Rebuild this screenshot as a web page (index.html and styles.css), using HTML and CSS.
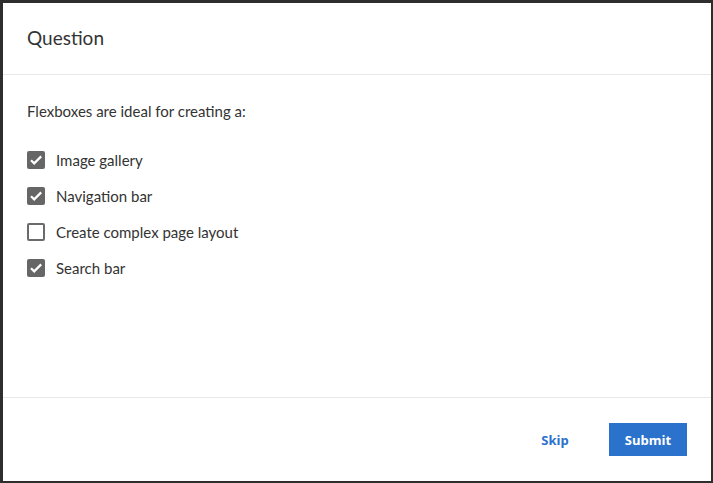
FILE: index.html
```html
<!DOCTYPE html>
<html lang="en">
<head>
<meta charset="utf-8">
<title>Question</title>
<link rel="stylesheet" href="styles.css">
</head>
<body>
<div class="modal">
  <header class="modal-header">
    <h1 class="title">Question</h1>
  </header>
  <main class="modal-body">
    <p class="prompt">Flexboxes are ideal for creating a:</p>
    <ul class="options">
      <li class="option"><span class="box checked"><svg viewBox="0 0 18 18" width="18" height="18"><path d="M4 9.2l3.2 3.2L14.2 5.4" fill="none" stroke="#fff" stroke-width="2.2"/></svg></span><span class="label">Image gallery</span></li>
      <li class="option"><span class="box checked"><svg viewBox="0 0 18 18" width="18" height="18"><path d="M4 9.2l3.2 3.2L14.2 5.4" fill="none" stroke="#fff" stroke-width="2.2"/></svg></span><span class="label">Navigation bar</span></li>
      <li class="option"><span class="box"></span><span class="label">Create complex page layout</span></li>
      <li class="option"><span class="box checked"><svg viewBox="0 0 18 18" width="18" height="18"><path d="M4 9.2l3.2 3.2L14.2 5.4" fill="none" stroke="#fff" stroke-width="2.2"/></svg></span><span class="label">Search bar</span></li>
    </ul>
  </main>
  <footer class="modal-footer">
    <button class="btn btn-link">Skip</button>
    <button class="btn btn-primary">Submit</button>
  </footer>
</div>
</body>
</html>
```

FILE: styles.css
```css
html, body {
  margin: 0;
  padding: 0;
  height: 100%;
}
body {
  background: #2e2e2e;
  padding: 3px 2px 2px 3px;
  box-sizing: border-box;
  font-family: Lato, "Open Sans", sans-serif;
  color: #333;
}
.modal {
  background: #fff;
  height: 478px;
  display: flex;
  flex-direction: column;
}
.modal-header {
  height: 71px;
  border-bottom: 1px solid #e8e8e8;
  display: flex;
  align-items: center;
  padding: 0 24px;
}
.title {
  margin: 0 0 2px;
  font-size: 19px;
  font-weight: 400;
  color: #333;
}
.modal-body {
  flex: 1;
  padding: 24px 24px 0;
}
.prompt {
  margin: 0 0 28px;
  font-size: 15px;
  line-height: 24px;
}
.options {
  list-style: none;
  margin: 0;
  padding: 0;
  display: flex;
  flex-direction: column;
  gap: 18px;
}
.option {
  display: flex;
  align-items: center;
  gap: 11px;
  height: 18px;
  font-size: 15px;
}
.box {
  width: 18px;
  height: 18px;
  box-sizing: border-box;
  border-radius: 2px;
  border: 2px solid #6b6b6b;
  display: flex;
  align-items: center;
  justify-content: center;
  flex: none;
}
.box.checked {
  background: #666;
  border: none;
}
.modal-footer {
  height: 83px;
  border-top: 1px solid #e8e8e8;
  display: flex;
  align-items: center;
  justify-content: flex-end;
  gap: 15px;
  padding: 0 24px 0 0;
}
.btn {
  font-family: "Open Sans", sans-serif;
  font-weight: 700;
  font-size: 13px;
  height: 33px;
  min-width: 78px;
  border: none;
  border-radius: 0;
  cursor: pointer;
}
.btn-link {
  background: transparent;
  color: #2b72cc;
}
.btn-primary {
  background: #2b72cc;
  color: #fff;
}
```
